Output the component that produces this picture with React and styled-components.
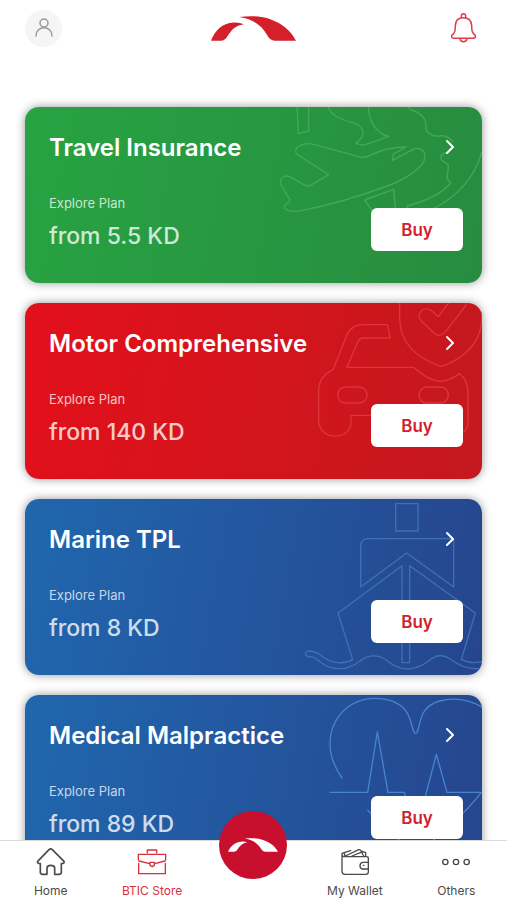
import React from "react";
import styled, { createGlobalStyle } from "styled-components";

const GlobalStyle = createGlobalStyle`
  *, *::before, *::after { box-sizing: border-box; }
  body {
    margin: 0;
    background: #fff;
    font-family: Inter, "Liberation Sans", sans-serif;
  }
`;

const Screen = styled.div`
  display: flex;
  flex-direction: column;
  height: 100vh;
  background: #fff;
`;

const Header = styled.header`
  display: grid;
  grid-template-columns: 1fr auto 1fr;
  align-items: center;
  height: 56px;
  padding: 0 25px;
`;

const RoundButton = styled.button`
  display: grid;
  place-items: center;
  width: 37px;
  height: 37px;
  padding: 0;
  border: 0;
  border-radius: 50%;
  background: #f5f5f5;
`;

const BellButton = styled.button`
  display: grid;
  justify-self: end;
  padding: 0;
  border: 0;
  margin-right: 5px;
  background: none;
`;

const Plans = styled.main`
  display: flex;
  flex: 1;
  flex-direction: column;
  gap: 20px;
  min-height: 0;
  padding: 51px 25px 60px;
  overflow-y: auto;
  scrollbar-width: none;
`;

const Card = styled.article`
  position: relative;
  display: flex;
  flex: none;
  justify-content: space-between;
  min-height: 176px;
  padding: 24px 19px 32px 24px;
  border-radius: 14px;
  background: linear-gradient(100deg, ${(p) => p.$from}, ${(p) => p.$to});
  box-shadow: 0 0 10px rgba(0, 0, 0, 0.42);
  overflow: hidden;
`;

const Art = styled.svg`
  position: absolute;
  top: 0;
  right: 0;
  fill: none;
  stroke: ${(p) => p.$line};
  stroke-width: 4;
  stroke-linejoin: round;
  stroke-linecap: round;
`;

const Details = styled.div`
  position: relative;
  display: flex;
  flex-direction: column;
  color: #fff;
`;

const Title = styled.h2`
  margin: 0;
  font-size: 24px;
  font-weight: 600;
  line-height: 34px;
`;

const Caption = styled.p`
  margin: 28px 0 0;
  color: rgba(255, 255, 255, 0.75);
  font-size: 13px;
  line-height: 20px;
`;

const Price = styled.p`
  margin: 8px 0 0;
  color: rgba(255, 255, 255, 0.8);
  font-size: 23px;
  font-weight: 500;
  line-height: 30px;
`;

const Actions = styled.div`
  position: relative;
  display: flex;
  flex-direction: column;
  align-items: flex-end;
  justify-content: space-between;
`;

const OpenButton = styled.button`
  display: grid;
  padding: 7px;
  border: 0;
  background: none;
`;

const BuyButton = styled.button`
  width: 92px;
  height: 43px;
  padding: 0;
  border: 0;
  border-radius: 6px;
  background: #fff;
  color: #d2202c;
  font: 600 17px/24px Inter, "Liberation Sans", sans-serif;
`;

const TabBar = styled.nav`
  position: relative;
  display: grid;
  grid-template-columns: repeat(5, 1fr);
  flex: none;
  height: 60px;
  border-top: 1px solid #dcdcdc;
  background: #fff;
`;

const Tab = styled.a`
  display: flex;
  flex-direction: column;
  align-items: center;
  padding-top: 6px;
  color: ${(p) => (p.$active ? "#d9303c" : "#4a4a4a")};
  font-size: 12px;
  font-weight: 400;
  line-height: 16px;
  text-decoration: none;
  gap: 6px;
`;

const CenterTab = styled.a`
  display: grid;
  place-items: center;
  justify-self: center;
  width: 68px;
  height: 68px;
  margin-top: -30px;
  border-radius: 50%;
  background: #c8102e;
`;

const TabIcon = styled.svg`
  fill: none;
  stroke: currentColor;
  stroke-width: ${(p) => p.$weight || 4};
  stroke-linejoin: round;
  stroke-linecap: round;
`;

function Logo({ width, height, color }) {
  return (
    <svg width={width} height={height} viewBox="65 46 254 73" preserveAspectRatio="none" fill={color} aria-hidden="true">
      <path d="M65 118C76 90 99 66 132 65Q151 64 163 70C137 74 127 86 115 104Q108 118 96 118Z" />
      <path d="M150 49C182 45 215 46 244 56C277 68 303 87 319 118H256C243 117 238 110 233 102C217 75 193 56 150 49Z" />
    </svg>
  );
}

function TravelArt() {
  return (
    <Art width="210" height="176" viewBox="37 37 630 528" $line="#40ab55" aria-hidden="true">
      <path d="M112 30L116 117L147 109V30M205 30C210 65 248 75 280 84C310 92 317 118 303 132Q295 142 288 146L311 152L388 125C360 120 326 91 326 30M440 30L452 45C483 54 499 69 499 94C496 117 521 128 548 123Q563 124 579 139M558 174C535 183 542 196 558 204C575 214 559 230 563 253L573 265C544 300 497 318 443 334L446 345M667 170C648 239 601 303 515 345" />
      <path d="M207 240L113 180C96 160 126 145 153 147L306 188Q316 190 331 182C360 168 399 157 440 157L401 178L398 197L459 165C479 155 497 168 496 186C496 219 429 258 375 277Q246 324 125 348C89 355 65 343 77 329Q91 322 91 315L65 273C55 251 75 240 91 246L136 272Q145 277 156 270ZM337 347L315 316L402 284L408 350" />
    </Art>
  );
}

function MotorArt() {
  return (
    <Art width="210" height="176" viewBox="-52 37 630 528" $line="#dc353d" aria-hidden="true">
      <path d="M303 142L294 102H220C190 103 176 121 170 139L132 236C104 250 88 270 88 298V392C92 451 185 451 185 393V374H440V398C449 448 536 444 536 396V300Q534 267 511 249C466 281 430 283 373 230H173L204 156Q210 142 223 142Z" />
      <path d="M331 30V82C331 154 375 198 455 228C530 203 577 149 577 85V30M483 30L447 78L427 60C402 42 377 73 396 91L436 129Q452 141 467 125L529 45V30" />
      <rect x="145" y="289" width="88" height="48" rx="24" />
      <rect x="389" y="289" width="88" height="48" rx="24" />
    </Art>
  );
}

function MarineArt() {
  return (
    <Art width="210" height="176" viewBox="-52 30 630 528" $line="#3f70b5" aria-hidden="true">
      <path d="M319 44H386V126H319ZM214 294V173Q214 149 237 149H493V294L352 192ZM338 521V230L146 372L190 512C165 527 126 524 96 500Q76 485 55 486C44 492 47 502 61 503Q75 502 86 513C119 545 170 548 209 518Q250 486 291 513C331 548 374 548 417 517Q450 486 487 513Q530 545 578 538M338 521H361V230L558 372L516 512Q547 526 578 518" />
    </Art>
  );
}

function MedicalArt() {
  return (
    <Art width="210" height="176" viewBox="-82 29 630 528" $line="#4684cf" aria-hidden="true">
      <path d="M128 278C80 210 81 136 125 84C163 41 220 30 274 46C333 65 333 111 341 133Q349 154 356 133C365 104 364 65 420 47Q488 29 552 67M92 321H205L234 140L266 321H315L350 442L411 207L443 321H546Q503 376 465 407L350 512L205 375" />
    </Art>
  );
}

const plans = [
  { title: "Travel Insurance", price: "from 5.5 KD", from: "#27a343", to: "#278c40", Drawing: TravelArt },
  { title: "Motor Comprehensive", price: "from 140 KD", from: "#e3101a", to: "#c4181f", Drawing: MotorArt },
  { title: "Marine TPL", price: "from 8 KD", from: "#2067ae", to: "#26458e", Drawing: MarineArt },
  { title: "Medical Malpractice", price: "from 89 KD", from: "#2067ae", to: "#26458e", Drawing: MedicalArt },
];

function PlanCard({ title, price, from, to, Drawing }) {
  return (
    <Card $from={from} $to={to}>
      <Drawing />
      <Details>
        <Title>{title}</Title>
        <Caption>Explore Plan</Caption>
        <Price>{price}</Price>
      </Details>
      <Actions>
        <OpenButton aria-label={`Open ${title}`}>
          <svg width="12" height="18" viewBox="0 0 12 18" fill="none" stroke="#fff" strokeWidth="2" strokeLinecap="round" strokeLinejoin="round">
            <path d="M3 3L9 9L3 15" />
          </svg>
        </OpenButton>
        <BuyButton>Buy</BuyButton>
      </Actions>
    </Card>
  );
}

export default function App() {
  return (
    <Screen>
      <GlobalStyle />
      <Header>
        <RoundButton aria-label="Profile">
          <svg width="20" height="20" viewBox="0 0 20 20" fill="none" stroke="#999" strokeWidth="1.5" strokeLinecap="round">
            <circle cx="10" cy="5" r="4" />
            <path d="M2 18C2 7 18 7 18 18" />
          </svg>
        </RoundButton>
        <Logo width={85} height={25} color="#d3202b" />
        <BellButton aria-label="Notifications">
          <svg width="26" height="32" viewBox="65 36 78 96" fill="none" stroke="#df3d49" strokeWidth="4.5" strokeLinecap="round" strokeLinejoin="round">
            <path d="M96 53V48C96 39 109 39 109 48V53M78 76C79 61 88 53 102 53C116 53 126 61 127 76C127 93 128 98 138 107Q140 114 132 115H73Q65 113 67 107C78 98 78 90 78 76ZM92 116C93 128 112 128 113 116" />
          </svg>
        </BellButton>
      </Header>
      <Plans>
        {plans.map((plan) => (
          <PlanCard key={plan.title} {...plan} />
        ))}
      </Plans>
      <TabBar aria-label="Main">
        <Tab href="#home">
          <TabIcon width="30" height="30" viewBox="109 141 90 90" $weight={5}>
            <path d="M114 184L148 149Q153 144 158 149L193 184Q195 191 185 191V217Q185 223 178 223H165V203Q164 196 153 196Q143 196 142 203V223H129Q122 223 122 217V191Q112 191 114 184Z" />
          </TabIcon>
          Home
        </Tab>
        <Tab href="#store" $active aria-current="page">
          <TabIcon width="30" height="30" viewBox="414 141 90 90">
            <path d="M445 158V150H473V158M452 191L420 183Q418 181 418 177V163H500V177Q500 181 498 183L467 191M453 187H466V196L460 200L453 196ZM419 190V221H499V190" />
          </TabIcon>
          BTIC Store
        </Tab>
        <CenterTab href="#main" aria-label="BTIC">
          <Logo width={50} height={14} color="#fff" />
        </CenterTab>
        <Tab href="#wallet">
          <TabIcon width="30" height="30" viewBox="88 141 90 90">
            <path d="M173 186V175Q173 170 167 170H98Q94 168 94 163V214Q94 223 103 223H165Q173 223 173 216V207M94 163Q94 158 102 158M173 187H157C145 188 145 206 157 207H173ZM103 168L100 158L120 152M104 168L144 149Q149 148 151 153L159 168M124 168L151 157M151 153L165 158V168M158 196H160" />
          </TabIcon>
          My Wallet
        </Tab>
        <Tab href="#others">
          <TabIcon width="30" height="30" viewBox="392 141 90 90">
            <circle cx="405" cy="186" r="8" />
            <circle cx="437" cy="186" r="8" />
            <circle cx="469" cy="186" r="8" />
          </TabIcon>
          Others
        </Tab>
      </TabBar>
    </Screen>
  );
}
